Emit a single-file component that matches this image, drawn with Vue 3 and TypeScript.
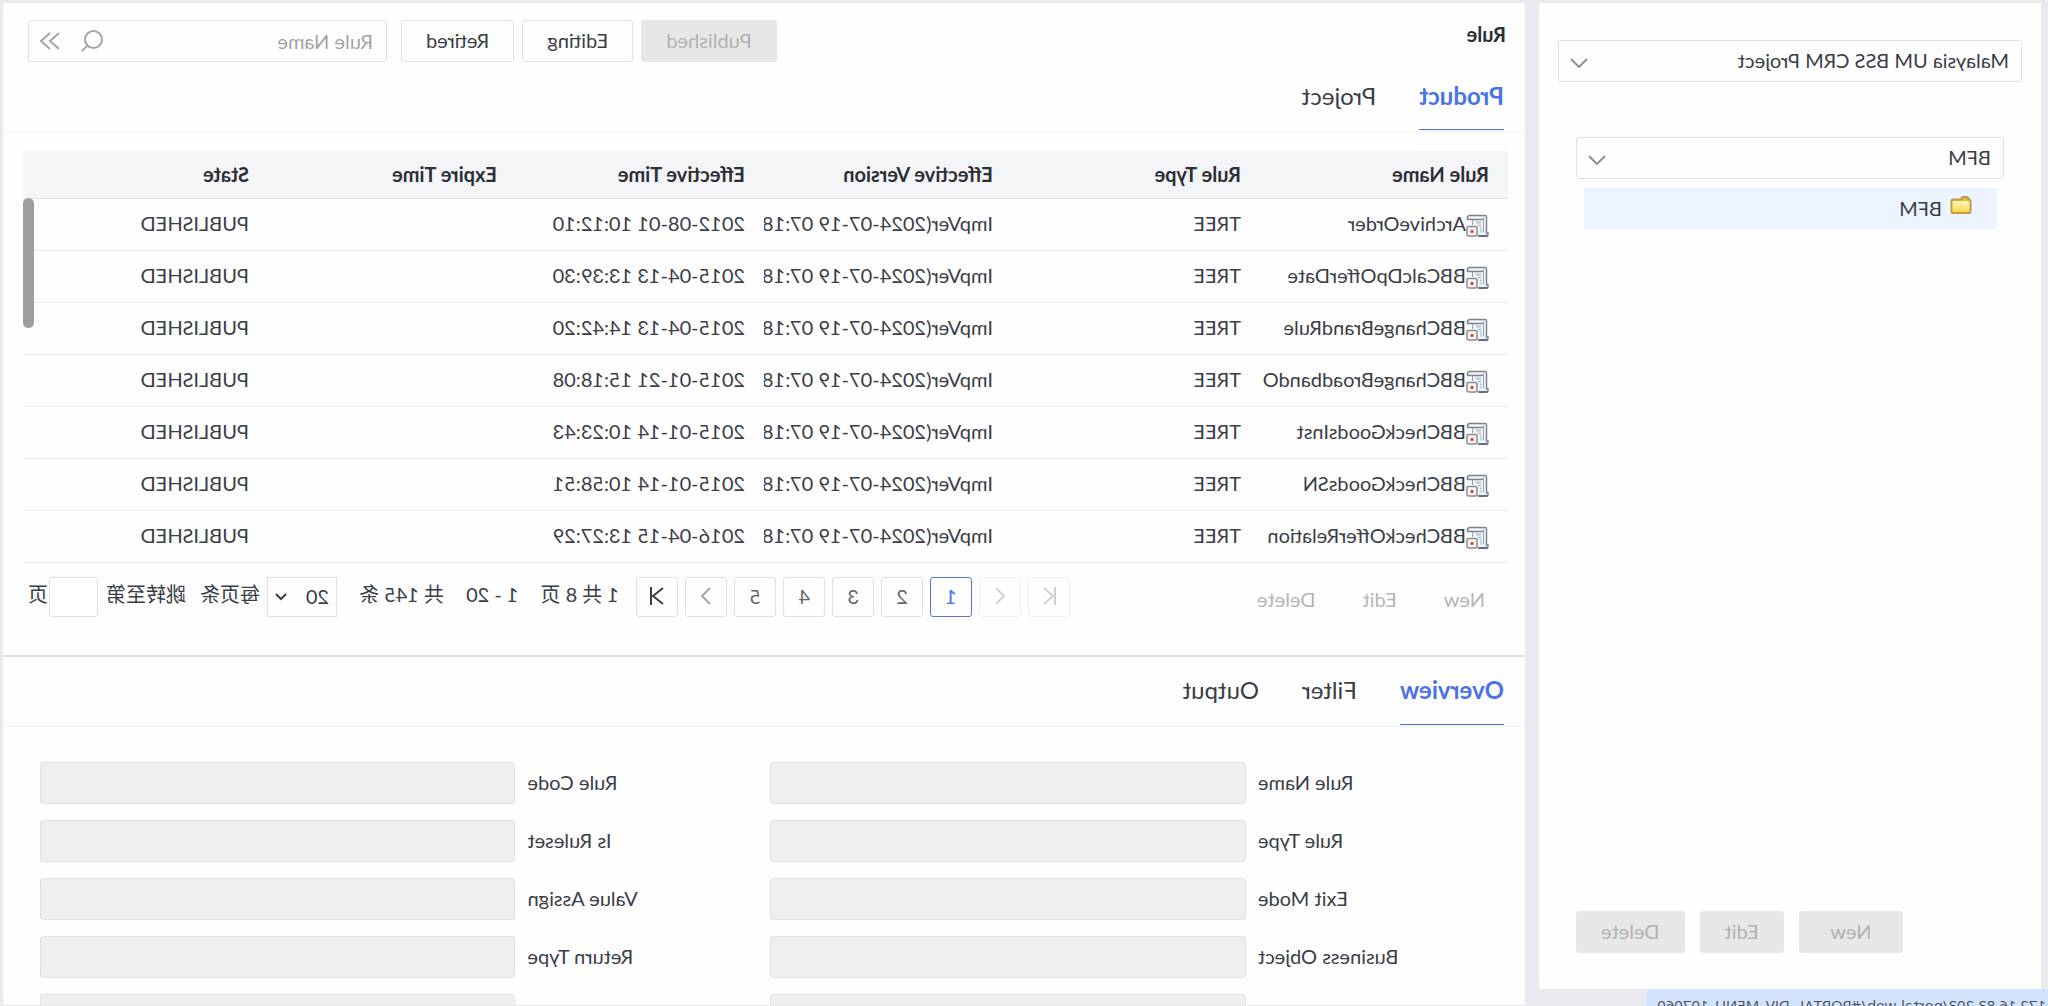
<script setup lang="ts">
import { ref } from 'vue'

interface RuleRow {
  name: string
  type: string
  version: string
  effective: string
  expire: string
  state: string
}

const columns: string[] = ['Rule Name', 'Rule Type', 'Effective Version', 'Effective Time', 'Expire Time', 'State']

const makeRow = (name: string, effective: string): RuleRow => ({
  name,
  type: 'TREE',
  version: 'ImpVer(2024-07-19 07:18',
  effective,
  expire: '',
  state: 'PUBLISHED',
})

const rows: RuleRow[] = [
  makeRow('ArchiveOrder', '2012-08-01 10:12:10'),
  makeRow('BBCalcDpOfferDate', '2015-04-13 13:39:30'),
  makeRow('BBChangeBrandRule', '2015-04-13 14:42:20'),
  makeRow('BBChangeBroadbandO', '2015-01-21 15:18:08'),
  makeRow('BBCheckGoodsInst', '2015-01-14 10:23:43'),
  makeRow('BBCheckGoodsSN', '2015-01-14 10:58:51'),
  makeRow('BBCheckOfferRelation', '2016-04-15 13:27:29'),
]

const pages: number[] = [1, 2, 3, 4, 5]
const page = ref(1)
const scope = ref('Product')
const detail = ref('Overview')
const keyword = ref('')

const fields: { id: string; label: string }[] = [
  { id: 'rule-name', label: 'Rule Name' },
  { id: 'rule-code', label: 'Rule Code' },
  { id: 'rule-type', label: 'Rule Type' },
  { id: 'is-ruleset', label: 'Is Ruleset' },
  { id: 'exit-mode', label: 'Exit Mode' },
  { id: 'value-assign', label: 'Value Assign' },
  { id: 'business-object', label: 'Business Object' },
  { id: 'return-type', label: 'Return Type' },
  { id: 'extra-left', label: '' },
  { id: 'extra-right', label: '' },
]
</script>

<template>
  <div class="screen">
    <aside class="side">
      <div class="select-box">
        <select class="select" aria-label="Project">
          <option>Malaysia UM BSS CRM Project</option>
        </select>
        <svg class="caret" viewBox="0 0 18 10"><path d="M1 1l8 8 8-8" /></svg>
      </div>
      <div class="tree">
        <div class="select-box">
          <select class="select" aria-label="Catalog">
            <option>BFM</option>
          </select>
          <svg class="caret" viewBox="0 0 18 10"><path d="M1 1l8 8 8-8" /></svg>
        </div>
        <div class="node">
          <svg class="folder" viewBox="0 0 22 18">
            <defs>
              <linearGradient id="folder-fill" x1="0" y1="0" x2="0" y2="1">
                <stop offset="0" stop-color="#fff6b8" />
                <stop offset="1" stop-color="#f6d94c" />
              </linearGradient>
            </defs>
            <path d="M1.500 5V15.500Q1.500 17 3 17H19Q20.500 17 20.500 15.500V5Q20.500 3.500 19 3.500H11L10 1.700Q9.600 1 8.800 1H5.200Q4.400 1 4 1.700L3.200 3.500Q1.500 3.500 1.500 5Z" fill="#e3b94a" stroke="#c09a45" />
            <rect x="2.500" y="5" width="17" height="11" rx="1" fill="url(#folder-fill)" />
          </svg>
          <span>BFM</span>
        </div>
      </div>
      <div class="side-actions">
        <button class="btn off new" disabled>New</button>
        <button class="btn off" disabled>Edit</button>
        <button class="btn off" disabled>Delete</button>
      </div>
    </aside>

    <main class="main">
      <section class="list">
        <header class="head">
          <h1 class="title">Rule</h1>
          <div class="filters">
            <button class="btn off" disabled>Published</button>
            <button class="btn">Editing</button>
            <button class="btn">Retired</button>
          </div>
          <div class="search">
            <input v-model="keyword" class="search-input" type="text" placeholder="Rule Name" aria-label="Rule Name" />
            <button class="icon-btn" aria-label="Search">
              <svg viewBox="0 0 22 22" width="22" height="22"><circle cx="9.500" cy="9.500" r="8.500" /><path d="M15.500 15.500L21 21" /></svg>
            </button>
            <button class="icon-btn" aria-label="More filters">
              <svg viewBox="0 0 22 18" width="22" height="18"><path d="M2 1l9 8-9 8M11 1l9 8-9 8" /></svg>
            </button>
          </div>
        </header>
        <nav class="tabs">
          <button v-for="t in ['Product', 'Project']" :key="t" class="tab" :class="{ active: scope === t }" @click="scope = t">{{ t }}</button>
        </nav>
        <div class="table-box">
          <table class="table">
            <thead>
              <tr>
                <th v-for="c in columns" :key="c">{{ c }}</th>
              </tr>
            </thead>
            <tbody>
              <tr v-for="r in rows" :key="r.name">
                <td>
                  <div class="name">
                    <svg class="doc" viewBox="0 0 23 23">
                      <g transform="matrix(-1 0 0 1 23 0)">
                        <path d="M6 2H20.500V19H22V22H7V6H2V2Z" fill="#f3f6f9" stroke="none" />
                        <path d="M17.500 5.500H1.500V3.500Q1.500 1.500 4 1.500H19Q20.500 1.500 20.500 3V19H22V20.500Q22 22 20.500 22H13" stroke="#7b828c" stroke-width="1.500" />
                        <path d="M6.500 6V11M17.500 3V18.500" stroke="#9aa3ad" stroke-width="1" />
                        <path d="M10 8.500h5M12 11.500h3M14 14.500h2M14 17.500h2" stroke="#b4cadd" />
                        <path d="M12 22H21.500" stroke="#555b66" stroke-width="1.500" />
                        <rect x="1" y="12.500" width="10" height="9.500" rx="1.500" fill="#fff6f2" stroke="#8a8b93" stroke-width="1.500" />
                        <rect x="4.500" y="16" width="3" height="3" rx="1" fill="#d2452f" stroke="none" />
                      </g>
                    </svg>
                    <span>{{ r.name }}</span>
                  </div>
                </td>
                <td>{{ r.type }}</td>
                <td>{{ r.version }}</td>
                <td>{{ r.effective }}</td>
                <td>{{ r.expire }}</td>
                <td>{{ r.state }}</td>
              </tr>
            </tbody>
          </table>
          <div class="thumb"></div>
        </div>
        <footer class="foot">
          <div class="row-actions">
            <button class="link" disabled>New</button>
            <button class="link" disabled>Edit</button>
            <button class="link" disabled>Delete</button>
          </div>
          <div class="pager">
            <button class="page faint" disabled aria-label="First page"><svg viewBox="0 0 16 18"><path d="M2 0V18M13 1L4 9l9 8" /></svg></button>
            <button class="page faint" disabled aria-label="Previous page"><svg viewBox="0 0 16 18"><path d="M12 1L4 9l8 8" /></svg></button>
            <button v-for="p in pages" :key="p" class="page" :class="{ current: page === p }" @click="page = p">{{ p }}</button>
            <button class="page next" aria-label="Next page"><svg viewBox="0 0 16 18"><path d="M4 1l8 8-8 8" /></svg></button>
            <button class="page last" aria-label="Last page"><svg viewBox="0 0 16 18"><path d="M14 0V18M2 1l10 8-10 8" /></svg></button>
          </div>
          <div class="summary">
            <span>1 共 8 页</span>
            <span>1 - 20</span>
            <span>共 145 条</span>
          </div>
          <label class="size">
            <span class="size-box">
              <select class="size-select"><option>20</option></select>
              <svg class="size-caret" viewBox="0 0 12 8"><path d="M1 1l5 5 5-5" /></svg>
            </span>
            <span class="word">每页条</span>
          </label>
          <label class="jump"><span class="word">跳转至第</span><input class="jump-input" type="text" /><span class="word">页</span></label>
        </footer>
      </section>

      <section class="detail">
        <nav class="tabs">
          <button v-for="t in ['Overview', 'Filter', 'Output']" :key="t" class="tab" :class="{ active: detail === t }" @click="detail = t">{{ t }}</button>
        </nav>
        <form class="form">
          <template v-for="f in fields" :key="f.id">
            <label class="label" :for="f.id">{{ f.label }}</label>
            <input :id="f.id" class="field" type="text" disabled />
          </template>
        </form>
      </section>
    </main>

    <div class="status">172.16.83.203/portal-web/#PORTAL_DIV_MENU_107060</div>
  </div>
</template>

<style>
body {
  margin: 0;
}
</style>

<style scoped>
.screen,
.screen * {
  box-sizing: border-box;
}
.screen {
  position: relative;
  display: flex;
  gap: 14px;
  height: 100vh;
  padding: 3px 3px 1px 7px;
  overflow: hidden;
  background: #e9eaf0;
  color: #3a3d46;
  font-family: Lato, "Noto Sans CJK SC", sans-serif;
  font-size: 20px;
  line-height: 24px;
  transform: scaleX(-1);
}
button,
input,
select {
  margin: 0;
  color: inherit;
  font: inherit;
}
svg {
  display: block;
  fill: none;
  stroke-width: 2;
}
.side {
  display: flex;
  flex-direction: column;
  flex: 0 0 502px;
  margin-bottom: 16px;
  padding: 37px 19px 36px;
  background: #fefefe;
}
.select-box {
  position: relative;
}
.select {
  display: block;
  width: 100%;
  height: 42px;
  padding: 0 40px 2px 12px;
  border: 1px solid #dfe0e3;
  border-radius: 3px;
  background: #fefefe;
  appearance: none;
}
.caret {
  position: absolute;
  top: 18px;
  right: 12px;
  width: 18px;
  height: 10px;
  stroke: #8f9196;
}
.tree {
  flex: 1;
  margin-top: 55px;
  padding: 0 18px;
}
.node {
  display: flex;
  align-items: center;
  gap: 8px;
  height: 41px;
  margin: 9px 8px 0 7px;
  padding: 0 0 2px 25px;
  background: #ebf4ff;
}
.folder {
  width: 22px;
  height: 18px;
  margin-bottom: 6px;
}
.side-actions {
  display: flex;
  justify-content: flex-end;
  gap: 15px;
  padding-right: 18px;
}
.btn {
  height: 42px;
  padding: 0 24px 2px;
  border: 1px solid #dfe0e3;
  border-radius: 3px;
  background: #fefefe;
}
.btn.off {
  border-color: #e7e7e7;
  background: #e7e7e7;
  color: #b2b2b2;
}
.new {
  width: 104px;
}
.main {
  display: flex;
  flex-direction: column;
  flex: 1;
  min-width: 0;
  background: #fefefe;
}
.list {
  border-bottom: 2px solid #dedfe2;
}
.head {
  display: flex;
  align-items: center;
  padding: 17px 25px 0 19px;
}
.title {
  flex: 1;
  margin: 0 0 14px;
  color: #2c2f38;
  font-size: 20px;
  font-weight: 700;
  line-height: 24px;
}
.filters {
  display: flex;
  gap: 8px;
  margin-right: 14px;
}
.search {
  display: flex;
  align-items: center;
  width: 359px;
  height: 42px;
  border: 1px solid #dfe0e3;
  border-radius: 3px;
}
.search-input {
  flex: 1;
  min-width: 0;
  height: 40px;
  padding: 0 0 0 13px;
  border: 0;
  outline: 0;
  background: none;
}
.search-input::placeholder {
  color: #a3a3a3;
  opacity: 1;
}
.icon-btn {
  display: flex;
  align-items: center;
  justify-content: center;
  width: 42px;
  height: 40px;
  padding: 0;
  border: 0;
  background: none;
  stroke: #a6a6a6;
}
.tabs {
  display: flex;
  gap: 43px;
  height: 70px;
  padding-left: 21px;
  border-bottom: 1px solid #f0f1f3;
}
.tab {
  height: 68px;
  padding: 0;
  border: 0;
  border-bottom: 1px solid transparent;
  background: none;
  font-size: 24px;
  line-height: 32px;
}
.tab.active {
  border-color: #4a6fd8;
  color: #4a73e8;
  font-weight: 700;
}
.table-box {
  position: relative;
  margin: 19px 20px 0 17px;
}
.table {
  width: 100%;
  border-collapse: collapse;
  table-layout: fixed;
}
.table th,
.table td {
  overflow: hidden;
  height: 52px;
  padding: 0 0 2px 19px;
  border-bottom: 1px solid #e9eaec;
  text-align: left;
  white-space: nowrap;
}
.table th {
  width: 248px;
  height: 47px;
  padding-bottom: 0;
  border-color: #dfe1e5;
  background: #f4f5f7;
  color: #2c2f38;
  font-weight: 700;
}
.table th:last-child {
  width: auto;
}
.name {
  display: flex;
  align-items: center;
}
.doc {
  flex: none;
  width: 23px;
  height: 23px;
  margin-top: 4px;
}
.thumb {
  position: absolute;
  top: 47px;
  right: 0;
  width: 11px;
  height: 130px;
  border-radius: 6px;
  background: #9e9e9e;
}
.foot {
  display: flex;
  align-items: center;
  height: 92px;
  padding: 0 25px 24px 40px;
  white-space: nowrap;
}
.row-actions {
  display: flex;
  flex: 1;
  gap: 47px;
  padding-top: 4px;
}
.link {
  padding: 0;
  border: 0;
  background: none;
  color: #b4b5b9;
}
.pager {
  display: flex;
  gap: 7px;
}
.page {
  display: flex;
  align-items: center;
  justify-content: center;
  width: 42px;
  height: 40px;
  padding: 0 0 2px;
  border: 1px solid #dfe0e3;
  border-radius: 3px;
  background: #fefefe;
  color: #62646b;
  stroke: #3a3d46;
}
.page svg {
  width: 16px;
  height: 18px;
}
.page.current {
  border-color: #5677d8;
  color: #4a73e8;
}
.page.faint {
  border-color: #efeff1;
  stroke: #cfcfd2;
}
.page.next {
  stroke: #a6a6a6;
}
.summary {
  display: flex;
  gap: 22px;
  margin: 0 22px 0 17px;
  padding-bottom: 6px;
}
.size {
  display: flex;
  align-items: center;
  gap: 7px;
}
.size-box {
  position: relative;
}
.size-select {
  display: block;
  width: 70px;
  height: 40px;
  padding: 0 0 2px 7px;
  border: 1px solid #dfe0e3;
  background: #fefefe;
  appearance: none;
}
.size-caret {
  position: absolute;
  top: 16px;
  right: 8px;
  width: 12px;
  height: 8px;
  stroke: #3a3d46;
}
.word {
  padding-bottom: 6px;
}
.jump {
  display: flex;
  align-items: center;
  margin-left: 14px;
}
.jump-input {
  width: 49px;
  height: 40px;
  margin: 0 1px 0 8px;
  border: 1px solid #dfe0e3;
  border-radius: 3px;
}
.detail {
  flex: 1;
  min-height: 0;
  overflow: hidden;
}
.form {
  display: grid;
  grid-template-columns: 255px 1fr 255px 1fr;
  gap: 16px 0;
  padding: 35px 37px 0 24px;
}
.label {
  padding-right: 12px;
  line-height: 40px;
  text-align: right;
}
.field {
  width: 100%;
  height: 42px;
  border: 1px solid #e2e2e2;
  border-radius: 3px;
  background: #efefef;
}
.status {
  position: absolute;
  bottom: 0;
  left: 0;
  width: 401px;
  height: 17px;
  padding: 6px 0 0 2px;
  overflow: hidden;
  background: #d3e3fd;
  color: #4a4e58;
  font-family: "Open Sans", sans-serif;
  font-size: 15px;
  line-height: 20px;
  white-space: nowrap;
}
</style>
